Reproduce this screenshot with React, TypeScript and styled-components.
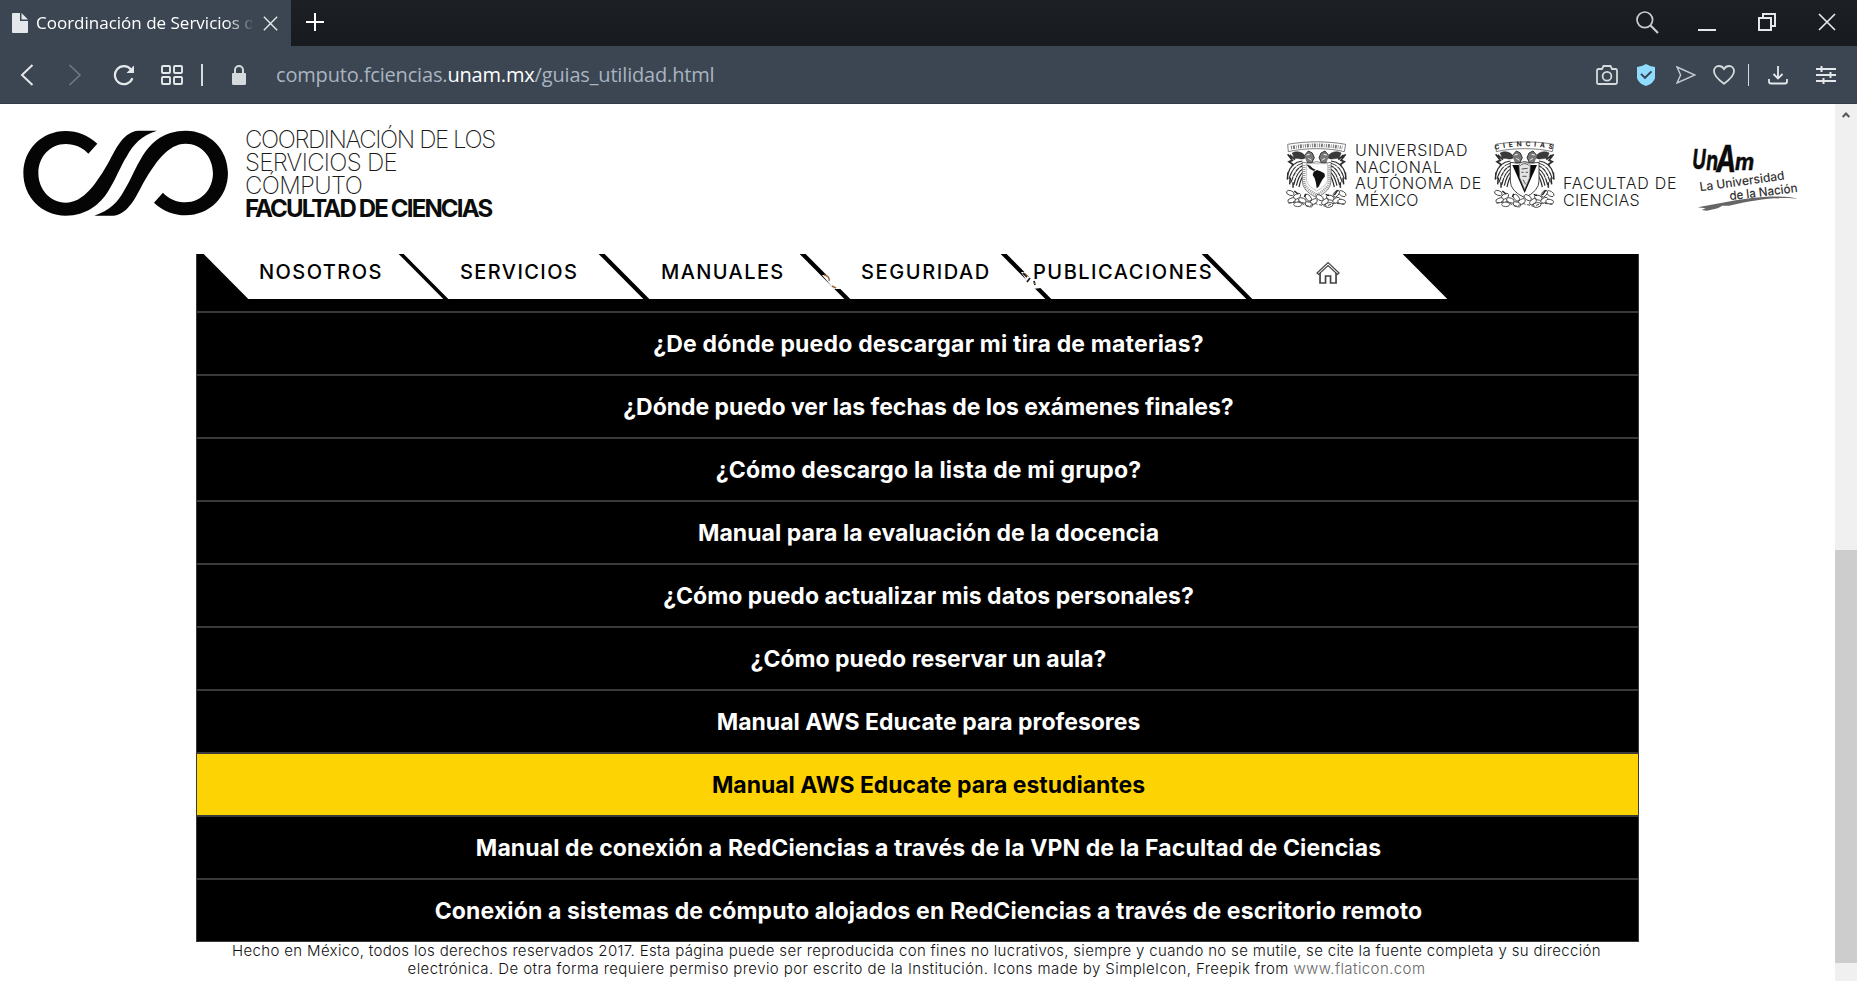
import React from 'react';
import styled, { createGlobalStyle } from 'styled-components';

const Global = createGlobalStyle`
  * { box-sizing: border-box; }
  html, body { margin: 0; padding: 0; overflow: hidden; background: #fff; }
  svg { display: block; flex: none; }
`;

const UI = `"Open Sans", "Noto Sans", sans-serif`;
const GEO = `Inter, "Liberation Sans", sans-serif`;

const Window = styled.div`
  width: 1857px;
  height: 981px;
  display: flex;
  flex-direction: column;
  overflow: hidden;
`;

/* ---------- browser chrome ---------- */

const TabStrip = styled.div`
  height: 46px;
  flex: none;
  display: flex;
  align-items: stretch;
  background: linear-gradient(#1c1f23, #171a1e);
`;

const Tab = styled.div`
  width: 291px;
  display: flex;
  align-items: center;
  padding: 0 12px;
  background: #3b4652;
  svg:last-child { margin-left: 11px; }
`;

const TabTitle = styled.div`
  width: 216px;
  margin-left: 8px;
  overflow: hidden;
  white-space: nowrap;
  font: 400 17px/24px ${UI};
  color: #fff;
  mask-image: linear-gradient(90deg, #000 190px, transparent 220px);
`;

const TabTools = styled.div`
  flex: 1;
  display: flex;
  align-items: center;
  padding: 0 21px 2px 15px;
`;

const Spring = styled.div`
  flex: 1;
`;

const Gap = styled.div<{ w: number }>`
  width: ${(p) => p.w}px;
  flex: none;
`;

const AddressBar = styled.div`
  height: 58px;
  flex: none;
  display: flex;
  align-items: center;
  padding: 0 21px 0 20px;
  background: #3b4652;
  border-bottom: 1px solid #333d48;
`;

const Url = styled.div`
  font: 400 20px/28px ${UI};
  letter-spacing: -0.17px;
  color: #a9b4c1;
  white-space: nowrap;
  padding-top: 1px;
  b { font-weight: 400; color: #fff; }
`;

const Rule = styled.div<{ w: number }>`
  width: ${(p) => p.w}px;
  height: 22px;
  background: #d5dadd;
`;

/* ---------- page ---------- */

const Viewport = styled.div`
  flex: 1;
  display: flex;
  min-height: 0;
`;

const Page = styled.div`
  width: 1835px;
  display: flex;
  flex-direction: column;
  background: #fff;
`;

const Header = styled.header`
  height: 150px;
  flex: none;
  display: flex;
  align-items: flex-start;
  padding: 23px 31px 0 20px;
`;

const Lines = styled.div<{ size: number; lh: number; top?: number; w: number; weight: number }>`
  width: ${(p) => p.w}px;
  margin-top: ${(p) => p.top || 0}px;
  font: ${(p) => p.weight} ${(p) => p.size}px/${(p) => p.lh}px ${GEO};
  color: #1a1a1a;
  white-space: nowrap;
`;

const Line = styled.div<{ ls: number; bold?: boolean }>`
  letter-spacing: ${(p) => p.ls}px;
  ${(p) => (p.bold ? 'font-weight: 700; color: #0c0c0c;' : '')}
`;

const Emblem = styled.div<{ w: number; top: number }>`
  width: ${(p) => p.w}px;
  margin-top: ${(p) => p.top}px;
`;

const Panel = styled.main`
  width: 1443px;
  margin-left: 196px;
  flex: none;
  background: #000;
  border: 1px solid #3a3a3a;
  border-top: 0;
`;

const Nav = styled.nav`
  position: relative;
  height: 57px;
  display: flex;
  gap: 5.6px;
  padding: 0 0 12px 28.6px;
  overflow: hidden;
`;

const NavItem = styled.a<{ pad: number }>`
  width: 195.3px;
  height: 45px;
  flex: none;
  padding-left: ${(p) => p.pad}px;
  background: #fff;
  transform: skewX(44.8deg);
`;

const NavLabel = styled.span<{ ls: number }>`
  display: inline-block;
  transform: skewX(-44.8deg);
  font: 500 20px/37px ${GEO};
  letter-spacing: ${(p) => p.ls}px;
  color: #000;
  white-space: nowrap;
`;

const HomeLink = styled.span`
  display: block;
  width: 24px;
  padding-top: 7px;
  transform: skewX(-44.8deg);
`;

/* remnants of the page heading that show through the slanted dividers */
const Remnants = styled.div`
  position: absolute;
  left: 0;
  top: 0;
  width: 1212px;
  height: 45px;
  pointer-events: none;
`;

const Item = styled.a<{ active?: boolean; ls: number }>`
  height: 63px;
  display: flex;
  align-items: center;
  justify-content: center;
  padding: 1px 0 0 22px;
  border-top: 2px solid #3a3a3a;
  background: ${(p) => (p.active ? '#fed304' : '#000')};
  color: ${(p) => (p.active ? '#000' : '#fff')};
  font: 700 23px/30px ${GEO};
  letter-spacing: ${(p) => p.ls}px;
  white-space: nowrap;
`;

const Footer = styled.footer`
  width: 1443px;
  margin-left: 195px;
  font: 300 15px/18px ${GEO};
  color: #111;
  text-align: center;
  white-space: nowrap;
`;

const FootLine = styled.div<{ ls: number }>`
  letter-spacing: ${(p) => p.ls}px;
  a { color: #666; }
`;

const Scrollbar = styled.div`
  width: 22px;
  display: flex;
  flex-direction: column;
  align-items: center;
  padding-top: 8px;
  background: #f0f0f0;
`;

const Thumb = styled.div`
  width: 22px;
  height: 413px;
  margin-top: 432px;
  background: #cdcdcd;
`;

/* ---------- drawings ---------- */

const ink = '#e4e8ea';

const Cross = ({ s }: { s: number }) => (
  <svg width={s} height={s} viewBox="0 0 18 18" fill="none" stroke={ink} strokeWidth="1.7">
    <path d="M1 1L17 17M17 1L1 17" />
  </svg>
);

const Brand = () => {
  const d =
    'M415 81C373 84 350 130 330 168C290 240 250 297 197 297C150 297 115 257 115 208C115 160 150 121 197 121C225 121 248 132 265 150L292 120C265 95 232 82 197 82C125 82 70 138 70 208C70 280 125 336 197 336C260 336 300 302 325 262C350 222 360 190 381 157C400 122 425 95 471 81Z';
  return (
    <svg width="213.3" height="93.3" viewBox="60 70 640 280" fill="#050505">
      <path d={d} />
      <path d={d} transform="rotate(180 377 208.5)" />
    </svg>
  );
};

const Wing = () => (
  <g fill="none" stroke="#2c2c2c">
    <path d="M40 54C50 48 66 50 74 58L80 68C68 76 58 68 46 70Z" fill="#3a3a3a" strokeWidth="2" />
    <path d="M26 58L40 76L30 80L44 90M32 60L48 74" strokeWidth="5" />
    <path
      d="M70 78C50 80 34 90 26 118M72 84C54 88 40 98 30 132M72 92C58 96 46 108 36 142M72 102C62 106 52 118 44 150M72 112C66 116 58 128 52 152M73 122C68 126 64 138 60 156"
      strokeWidth="3.6"
    />
    <path d="M27 112L25 134M34 128L32 148M42 142L42 158" strokeWidth="4.5" />
    <path d="M50 94L62 98M42 108L58 114M40 122L54 130" stroke="#fff" strokeWidth="2" />
  </g>
);

const Cacti = () => (
  <g fill="#fff" stroke="#333" strokeWidth="2.4">
    {[
      [34, 174, 20], [54, 184, -30], [38, 196, -20], [70, 196, 20], [88, 188, 50], [104, 200, -30],
      [122, 188, 30], [138, 200, -40], [154, 188, 20], [172, 196, -30], [190, 176, 30], [188, 200, 10],
      [56, 208, 0], [90, 208, 20], [150, 210, -10], [172, 176, -50],
    ].map(([x, y, r], i) => (
      <ellipse key={i} cx={x} cy={y} rx="12" ry="7" transform={`rotate(${r} ${x} ${y})`} />
    ))}
    <path d="M28 204L60 200L84 214L110 206L140 214L166 204L196 208" fill="none" stroke="#444" strokeWidth="3" strokeDasharray="9 5" />
    <path d="M46 168L58 178M80 176L76 186M140 178L150 182M176 166L166 180" stroke="#222" strokeWidth="4" />
  </g>
);

const Seal = ({ science }: { science?: boolean }) => (
  <svg width="75" height="80" viewBox="0 0 225 240">
    <path d="M26 28C80 18 146 18 200 28L196 50C150 38 76 38 28 50Z" fill="#fff" stroke="#666" strokeWidth="2.5" />
    {science ? (
      <>
        <defs>
          <path id="arc" d="M24 45Q112 22 203 45" />
        </defs>
        <text fontFamily="Inter" fontWeight="700" fontSize="20" fill="#222" textLength="174">
          <textPath href="#arc">CIENCIAS</textPath>
        </text>
      </>
    ) : (
      <path d="M36 38Q112 24 190 38" fill="none" stroke="#777" strokeWidth="11" strokeDasharray="3 3 6 3 2 4" />
    )}
    <Wing />
    <g transform="translate(226 0) scale(-1 1)">
      <Wing />
    </g>
    <path
      d="M76 62L88 48L100 54L106 68L98 84L84 84M150 62L138 48L126 54L120 68L128 84L142 84"
      fill="#777"
      stroke="#333"
      strokeWidth="3"
    />
    <path d="M82 60L92 58M144 60L134 58M88 70L98 76M138 70L128 76" stroke="#eee" strokeWidth="3" />
    <path
      d="M70 82Q92 88 113 80Q134 88 156 82V138Q156 168 113 188Q70 168 70 138Z"
      fill="#fff"
      stroke="#444"
      strokeWidth={science ? 3 : 2}
    />
    {science ? (
      <>
        <path d="M76 90H150L113 174Z" fill="#0a0a0a" />
        <path d="M96 90C98 78 124 78 130 90L128 128L113 164L98 128Z" fill="#e4e4e4" stroke="#555" strokeWidth="2" />
        <path d="M100 92C106 84 120 84 126 92M104 102L122 100M103 112H110M116 112H123M106 124H119M108 134L116 148" fill="none" stroke="#555" strokeWidth="3" />
      </>
    ) : (
      <>
        <path d="M75 90V138Q76 160 113 180Q150 160 151 138V90" fill="none" stroke="#999" strokeWidth="9" strokeDasharray="3 3" />
        <path d="M82 86H146V134Q144 152 113 168Q84 152 82 134Z" fill="#fff" stroke="#888" strokeWidth="1.5" />
        <path d="M82 88L94 92L100 99L110 104L104 108L92 101Z" fill="#222" />
        <path d="M104 110L114 105L124 109L136 115L138 124L130 134L125 143L119 155L113 160L111 144L107 130L101 120Z" fill="#111" />
      </>
    )}
    <Cacti />
  </svg>
);

const Motto = () => (
  <svg width="120" height="80" viewBox="0 0 360 240" fontFamily="Inter" fill="#333">
    <g fill="#0b0b0b" stroke="#0b0b0b" strokeWidth="1.5" fontWeight="700" fontStyle="italic">
      <text transform="translate(22 94) scale(0.68 1)" fontSize="82">U</text>
      <text transform="translate(64 95) scale(0.7 1)" fontSize="82">n</text>
      <text transform="translate(94 101) scale(0.72 1)" fontSize="110">A</text>
      <text transform="translate(150 95) scale(0.9 1)" fontSize="70">m</text>
    </g>
    <g fontSize="37" fontWeight="500">
      <text transform="translate(46 160) rotate(-8)" textLength="256" lengthAdjust="spacingAndGlyphs">La Universidad</text>
      <text transform="translate(135 187) rotate(-7)" textLength="205" lengthAdjust="spacingAndGlyphs">de la Nación</text>
    </g>
    <path d="M38 208L112 194C190 178 290 168 338 182C290 175 210 184 132 203L112 203L98 211L66 218L50 216L62 211Z" fill="#666" />
  </svg>
);

const rows: [string, number][] = [
  ['¿De dónde puedo descargar mi tira de materias?', 0.2],
  ['¿Dónde puedo ver las fechas de los exámenes finales?', -0.03],
  ['¿Cómo descargo la lista de mi grupo?', 0.17],
  ['Manual para la evaluación de la docencia', 0.05],
  ['¿Cómo puedo actualizar mis datos personales?', 0.02],
  ['¿Cómo puedo reservar un aula?', 0],
  ['Manual AWS Educate para profesores', 0],
  ['Manual AWS Educate para estudiantes', -0.02],
  ['Manual de conexión a RedCiencias a través de la VPN de la Facultad de Ciencias', 0.12],
  ['Conexión a sistemas de cómputo alojados en RedCiencias a través de escritorio remoto', 0.12],
];

const links: [string, number, number][] = [
  ['NOSOTROS', 1.43, 37],
  ['SERVICIOS', 1.4, 37.5],
  ['MANUALES', 1.4, 37.5],
  ['SEGURIDAD', 1.6, 37.3],
  ['PUBLICACIONES', 1.5, 8.3],
];

export default function App() {
  return (
    <Window>
      <Global />
      <TabStrip>
        <Tab>
          <svg width="16" height="20" viewBox="0 0 16 20" fill={ink}>
            <path d="M0 1Q0 0 1 0H8V8H16V19Q16 20 15 20H1Q0 20 0 19Z" />
            <path d="M9.5 0L16 6.5H9.5Z" />
          </svg>
          <TabTitle>Coordinación de Servicios de</TabTitle>
          <Cross s={15} />
        </Tab>
        <TabTools>
          <svg width="18" height="18" viewBox="0 0 18 18" stroke="#fff" strokeWidth="2">
            <path d="M9 0V18M0 9H18" />
          </svg>
          <Spring />
          <svg width="23" height="23" viewBox="0 0 23 23" fill="none" stroke="#c9cdd0" strokeWidth="1.7">
            <circle cx="8.8" cy="8.8" r="7.8" />
            <path d="M14.3 14.3L22 22" strokeWidth="2.2" />
          </svg>
          <Gap w={39} />
          <svg width="18" height="18" viewBox="0 0 18 18" fill={ink}>
            <path d="M0 16H18V18H0Z" />
          </svg>
          <Gap w={42} />
          <svg width="18" height="18" viewBox="0 0 18 18" fill="none" stroke={ink} strokeWidth="2">
            <path d="M1 5H13V17H1ZM5 5V1H17V13H13" />
          </svg>
          <Gap w={42} />
          <Cross s={18} />
        </TabTools>
      </TabStrip>

      <AddressBar>
        <svg width="14" height="22" viewBox="0 0 14 22" fill="none" stroke={ink} strokeWidth="2">
          <path d="M12.5 1L2 11L12.5 21" />
        </svg>
        <Gap w={34} />
        <svg width="14" height="22" viewBox="0 0 14 22" fill="none" stroke="#6f7a84" strokeWidth="1.6">
          <path d="M1.5 1L12 11L1.5 21" />
        </svg>
        <Gap w={31} />
        <svg width="22" height="22" viewBox="0 0 22 22" fill="none" stroke={ink} strokeWidth="2.2">
          <path d="M19.4 14.2A9 9 0 1 1 18 5.6" />
          <path d="M21 1.5V9H13.5Z" fill={ink} stroke="none" />
        </svg>
        <Gap w={26} />
        <svg width="22" height="20" viewBox="0 0 22 20" fill="none" stroke={ink} strokeWidth="1.9">
          <rect x="1" y="1" width="8" height="7" rx="1" />
          <rect x="13" y="1" width="8" height="7" rx="1" />
          <rect x="1" y="12" width="8" height="7" rx="1" />
          <rect x="13" y="12" width="8" height="7" rx="1" />
        </svg>
        <Gap w={18} />
        <Rule w={2} />
        <Gap w={29} />
        <svg width="14" height="20" viewBox="0 0 14 20" fill="#d5dadd">
          <path d="M0 9Q0 8 1 8H13Q14 8 14 9V18.5Q14 20 12.5 20H1.5Q0 20 0 18.5Z" />
          <path d="M3 9V5A4 4 0 0 1 11 5V9" fill="none" stroke="#d5dadd" strokeWidth="2" />
        </svg>
        <Gap w={30} />
        <Url>
          computo.fciencias.<b>unam.mx</b>/guias_utilidad.html
        </Url>
        <Spring />
        <svg width="22" height="20" viewBox="0 0 22 20" fill="none" stroke="#d5dadd" strokeWidth="1.8">
          <path d="M1 5.5Q1 4 2.5 4H6L7.5 1H14.5L16 4H19.5Q21 4 21 5.5V17.5Q21 19 19.5 19H2.5Q1 19 1 17.5Z" />
          <circle cx="11" cy="11.3" r="4.4" />
        </svg>
        <Gap w={19} />
        <svg width="18" height="22" viewBox="0 0 18 22">
          <path d="M9 0Q13 2.6 18 3V14Q17 19 9 22Q1 19 0 14V3Q5 2.6 9 0Z" fill="#8fdcff" />
          <path d="M4 9.8L8 13.8L14.5 7.4" fill="none" stroke="#34424f" strokeWidth="1.9" />
        </svg>
        <Gap w={21} />
        <svg width="20" height="18" viewBox="0 0 20 18" fill="none" stroke="#c5cbd0" strokeWidth="1.4">
          <path d="M1 1L19 9L1 17L4.6 9Z" />
        </svg>
        <Gap w={17} />
        <svg width="22" height="20" viewBox="0 0 22 20" fill="none" stroke="#d5dadd" strokeWidth="1.8">
          <path d="M11 18.8C4 13.6 1 10 1 6.3C1 3.2 3.3 1 6 1C8.2 1 10 2.2 11 4C12 2.2 13.8 1 16 1C18.7 1 21 3.2 21 6.3C21 10 18 13.6 11 18.8Z" />
        </svg>
        <Gap w={13} />
        <Rule w={1} />
        <Gap w={19} />
        <svg width="20" height="20" viewBox="0 0 20 20" fill="none" stroke={ink} strokeWidth="1.8">
          <path d="M10 1V13M5.5 9L10 13.5L14.5 9M1 14V16.5Q1 18.5 3 18.5H17Q19 18.5 19 16.5V14" />
        </svg>
        <Gap w={28} />
        <svg width="20" height="18" viewBox="0 0 20 18" fill="none" stroke={ink} strokeWidth="2">
          <path d="M0 3H20M0 9H20M0 15H20M5.5 0V6M14.5 6V12M7.5 12V18" />
        </svg>
      </AddressBar>

      <Viewport>
        <Page>
          <Header>
            <Brand />
            <Gap w={11.7} />
            <Lines size={24} lh={22.9} w={260} top={2} weight={200}>
              <Line ls={-1.38}>COORDINACIÓN DE LOS</Line>
              <Line ls={-0.68}>SERVICIOS DE</Line>
              <Line ls={-0.65}>CÓMPUTO</Line>
              <Line ls={-1.84} bold>FACULTAD DE CIENCIAS</Line>
            </Lines>
            <Spring />
            <Emblem w={76} top={8}>
              <Seal />
            </Emblem>
            <Lines size={16} lh={16.5} w={132} top={15} weight={300}>
              <Line ls={0.62}>UNIVERSIDAD</Line>
              <Line ls={0.66}>NACIONAL</Line>
              <Line ls={0.72}>AUTÓNOMA DE</Line>
              <Line ls={0.2}>MÉXICO</Line>
            </Lines>
            <Emblem w={76} top={8}>
              <Seal science />
            </Emblem>
            <Lines size={16} lh={16.5} w={122} top={48} weight={300}>
              <Line ls={0.78}>FACULTAD DE</Line>
              <Line ls={0.35}>CIENCIAS</Line>
            </Lines>
            <Emblem w={119} top={11}>
              <Motto />
            </Emblem>
          </Header>

          <Panel>
            <Nav>
              {links.map(([t, ls, pad]) => (
                <NavItem key={t} pad={pad}>
                  <NavLabel ls={ls}>{t}</NavLabel>
                </NavItem>
              ))}
              <NavItem pad={93}>
                <HomeLink>
                  <svg width="24" height="24" viewBox="0 0 24 24" fill="none" stroke="#444" strokeWidth="1.7">
                    <path d="M1 12L12 1.5L23 12L21.5 13.5L12 4.5L2.5 13.5Z" strokeWidth="1.2" />
                    <path d="M4 12V22H9.5V15H14.5V22H20V12" />
                  </svg>
                </HomeLink>
              </NavItem>
              <Remnants>
                <svg width="1212" height="45" viewBox="197 254 1212 45">
                  <path d="M822 275L828 275L842 289L834 289Z" fill="#fff" />
                  <path d="M824 275Q830 276 829 281M832 286L836 288" fill="none" stroke="#9a6a3a" strokeWidth="1.4" />
                  <path d="M1021 272L1029 272L1041 288L1032 289Z" fill="#fff" />
                  <path d="M1023 273L1027 277M1030 278L1027 282M1034 281L1035 285" stroke="#222" strokeWidth="1.8" />
                  <path d="M1025 273L1029 277M1034 283L1036 284" stroke="#c98a4a" strokeWidth="1" />
                </svg>
              </Remnants>
            </Nav>
            {rows.map(([t, ls], i) => (
              <Item key={t} ls={ls} active={i === 7}>
                {t}
              </Item>
            ))}
          </Panel>

          <Footer>
            <FootLine ls={0.34}>
              Hecho en México, todos los derechos reservados 2017. Esta página puede ser reproducida con fines no
              lucrativos, siempre y cuando no se mutile, se cite la fuente completa y su dirección
            </FootLine>
            <FootLine ls={0.41}>
              electrónica. De otra forma requiere permiso previo por escrito de la Institución. Icons made by
              SimpleIcon, Freepik from <a>www.flaticon.com</a>
            </FootLine>
          </Footer>
        </Page>
        <Scrollbar>
          <svg width="8" height="6" viewBox="0 0 8 6" fill="none" stroke="#555" strokeWidth="2">
            <path d="M0.7 5L4 1.5L7.3 5" />
          </svg>
          <Thumb />
        </Scrollbar>
      </Viewport>
    </Window>
  );
}
